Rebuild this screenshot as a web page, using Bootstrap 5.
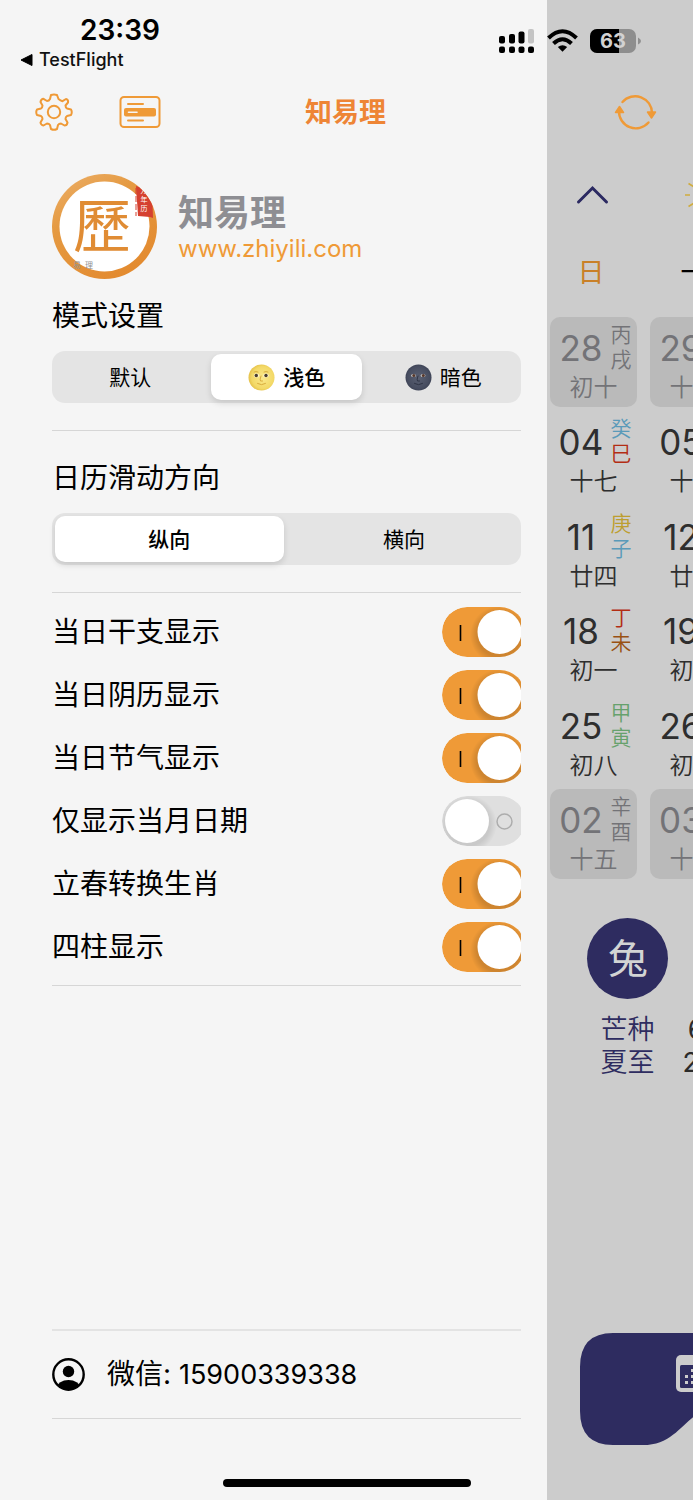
<!DOCTYPE html>
<html lang="zh-CN">
<head>
<meta charset="utf-8">
<meta name="viewport" content="width=device-width, initial-scale=1">
<title>知易理</title>
<link href="https://cdn.jsdelivr.net/npm/bootstrap@5.3.0/dist/css/bootstrap.min.css" rel="stylesheet">
<style>
  :root { --brand: #ef9a37; --navy: #2e2c60; --panel: #f5f5f5; --rule: #d6d6d6; }
  body { font-family: Inter, "Noto Sans CJK SC", sans-serif; background: #cccccc; color: #000; }
  svg { display: block; flex: none; }
  .screen { min-height: 100vh; overflow: hidden; }
  .plain-btn { background: none; border: 0; padding: 0; color: var(--brand); }

  /* status bar */
  .status-bar { top: 0; left: 0; right: 0; height: 84px; }
  .clock { font-size: 28px; font-weight: 600; line-height: 34px; padding: 13px 0 0 80px; }
  .back-app { font-size: 18px; font-weight: 500; line-height: 24px; margin: 1px 0 0 20px; gap: 6px; color: #111; }
  .status-icons { gap: 12px; padding: 28px 52px 0 0; }
  .battery-label { font: 700 20px Inter, sans-serif; }

  /* drawer */
  .drawer { flex: 0 0 79%; background: var(--panel); padding-top: 84px; }
  .drawer-head { height: 56px; padding-left: 35px; gap: 46px; }
  .drawer-title { font-size: 27px; font-weight: 700; line-height: 36px; color: #ee8535; margin-left: 98px; padding-top: 2px; }
  .drawer-body { padding: 34px 26px 0 52px; }
  .app-name { font-size: 36px; font-weight: 700; line-height: 40px; color: #8e8e93; }
  .app-link { font-size: 24px; line-height: 32px; color: var(--brand); text-decoration: none; }
  .profile { gap: 21px; margin-bottom: 18px; }
  .heading { font-size: 28px; line-height: 36px; font-weight: 400; margin: 0; padding: 1px 0 17px; }
  .rule { border: 0; border-top: 1px solid var(--rule); opacity: 1; margin: 0; }
  .segment { height: 52px; background: #e4e4e4; border-radius: 13px; margin-bottom: 27px; }
  .segment label { flex: 1 1 0; margin: 3px; padding-top: 1px; border-radius: 10px; gap: 8px; font-size: 21px; line-height: 28px; cursor: pointer; }
  .segment .btn-check:checked + label { background: #fff; font-weight: 500; box-shadow: 0 3px 6px rgba(0,0,0,.13); }
  .direction { padding-top: 28px; }
  .toggles { padding: 7px 0; }
  .toggle-row { height: 63px; font-size: 28px; line-height: 36px; }
  .toggle-row label { padding-top: 1px; }
  .toggle-row .form-check-input {
    width: 79px; height: 50px; margin: 0; border: 0; border-radius: 25px 0 0 25px; background-color: transparent; cursor: pointer;
    background-size: 79px 50px; background-position: left center; background-repeat: no-repeat;
    background-image: url("data:image/svg+xml,%3Csvg xmlns='http://www.w3.org/2000/svg' viewBox='0 0 79 50'%3E%3Cdefs%3E%3CradialGradient id='s'%3E%3Cstop offset='.75' stop-opacity='.1'/%3E%3Cstop offset='1' stop-opacity='0'/%3E%3C/radialGradient%3E%3CclipPath id='c'%3E%3Crect width='83' height='50' rx='25'/%3E%3C/clipPath%3E%3C/defs%3E%3Cg clip-path='url(%23c)'%3E%3Crect width='83' height='50' fill='%23dfdfdf'/%3E%3Ccircle cx='26' cy='28' r='29' fill='url(%23s)'/%3E%3Ccircle cx='25' cy='25' r='22' fill='%23fff'/%3E%3Ccircle cx='62.500' cy='25.500' r='7.500' fill='none' stroke='%23adadad' stroke-width='1.500'/%3E%3C/g%3E%3C/svg%3E");
  }
  .toggle-row .form-check-input:checked {
    background-color: transparent;
    background-image: url("data:image/svg+xml,%3Csvg xmlns='http://www.w3.org/2000/svg' viewBox='0 0 79 50'%3E%3Cdefs%3E%3CradialGradient id='s'%3E%3Cstop offset='.75' stop-opacity='.14'/%3E%3Cstop offset='1' stop-opacity='0'/%3E%3C/radialGradient%3E%3CclipPath id='c'%3E%3Crect width='83' height='50' rx='25'/%3E%3C/clipPath%3E%3C/defs%3E%3Cg clip-path='url(%23c)'%3E%3Crect width='83' height='50' fill='%23ef9a37'/%3E%3Ccircle cx='57' cy='28' r='29' fill='url(%23s)'/%3E%3Ccircle cx='57.500' cy='25' r='22' fill='%23fff'/%3E%3Crect x='17.700' y='18' width='1.600' height='16' fill='%23000'/%3E%3C/g%3E%3C/svg%3E");
  }
  .drawer-foot { padding: 0 26px 81px 52px; }
  .rule-soft { border-top: 2px solid #e3e3e3; }
  .contact { height: 87px; gap: 22px; font-size: 28px; line-height: 36px; }
  .contact-number { font-size: 27px; }
  .home-bar { left: 0; right: 0; bottom: 13px; }
  .home-bar span { width: 248px; height: 8px; border-radius: 4px; background: #000; }

  /* calendar behind the drawer */
  .calendar { flex: 1 1 0; min-width: 0; overflow: hidden; padding-top: 84px; }
  .cal-head { height: 56px; padding-left: 67px; }
  .cal-tools { height: 110px; padding-left: 28px; gap: 76px; }
  .week-row, .day-grid { display: grid; grid-template-columns: 87px 87px; column-gap: 13px; margin-left: 3px; width: 187px; }
  .week-row { height: 42px; font-size: 27px; line-height: 42px; text-align: center; padding-top: 2px; margin-bottom: 25px; }
  .week-row .sunday { color: #c98028; padding-right: 6px; }
  .day-grid { height: 562px; grid-auto-rows: 90px; align-content: space-between; color: #2e2e2e; font-weight: 350; }
  .day { border-radius: 10px; padding: 5px 6px 0 8px; }
  .day.outside { background: #bababa; color: #737377; }
  .day-number { font-size: 35px; line-height: 52px; width: 45px; text-align: center; font-weight: 400; }
  .stems { font-size: 21px; line-height: 25px; width: 21px; }
  .lunar { font-size: 24px; line-height: 28px; text-align: center; margin-left: -3px; }
  .blue { color: #5a9ab9; } .red { color: #b32d14; } .gold { color: #bd9e2f; } .brown { color: #995113; } .green { color: #66a16c; }
  .summary { padding: 39px 0 0 40px; }
  .zodiac { width: 81px; height: 81px; border-radius: 50%; background: var(--navy); color: #d2d4d4; font-size: 40px; line-height: 81px; text-align: center; }
  .terms { font-size: 27px; line-height: 33px; color: var(--navy); margin-top: 14px; gap: 28px; padding-left: 13px; font-weight: 350; }
  .terms-when { color: #2b2b2b; font-weight: 400; }
  .dock { margin: auto 0 0 32px; padding-bottom: 55px; }
</style>
</head>
<body>
<div class="screen d-flex position-relative">

  <main class="drawer d-flex flex-column">
    <header class="drawer-head d-flex align-items-center">
      <button class="plain-btn" type="button" aria-label="设置">
        <svg width="38" height="38" viewBox="0 0 38 38" fill="none" stroke="currentColor" stroke-width="2" stroke-linejoin="round">
          <path d="M16 2 Q19 1 22 2 L23.500 6 Q25.500 7.600 27.500 8.200 L31 6 Q33.500 6.500 33 9.500 L30.500 12.500 Q30.500 14.500 32 15.500 L36 16.500 Q37.500 19 36 22 L32 23 Q30.500 24 30.500 26 L32.500 29.500 Q32 32.500 29.500 32.500 L26 30.500 Q24 30.500 23 32 L22 36 Q19 37.500 16 36 L15 32 Q14 30.500 12 30.500 L8.500 32.500 Q5.800 32 5.500 29.500 L7.500 26 Q7.500 24 6 23 L2 22 Q.500 19 2 16.500 L6 15.500 Q7.500 14.500 7.500 12.500 L5.500 9 Q6 6 8.500 5.800 L12 8 Q14 8 15 6 Z"/>
          <circle cx="19" cy="19" r="6.200"/>
        </svg>
      </button>
      <button class="plain-btn" type="button" aria-label="卡片">
        <svg width="42" height="34" viewBox="0 0 42 34" fill="none" stroke="currentColor" stroke-width="2" stroke-linecap="round">
          <rect x="1.500" y="2" width="39" height="30" rx="3.500"/>
          <path d="M9 9H24M9 25.500H24"/>
          <rect x="5" y="13" width="32" height="8.600" rx="2" fill="currentColor" stroke="none"/>
          <path d="M9.500 17.200H18" stroke="#f5f5f5" stroke-width="1.600"/>
        </svg>
      </button>
      <h1 class="drawer-title mb-0">知易理</h1>
    </header>

    <div class="drawer-body">
      <section class="profile d-flex align-items-center">
        <svg width="105" height="105" viewBox="0 0 105 105">
          <defs>
            <linearGradient id="ring" x1="0" y1="0" x2=".6" y2="1"><stop offset="0" stop-color="#ecb06a"/><stop offset=".4" stop-color="#e59a42"/><stop offset="1" stop-color="#e38b30"/></linearGradient>
            <clipPath id="disc"><circle cx="52.500" cy="52.500" r="52.500"/></clipPath>
          </defs>
          <circle cx="52.500" cy="52.500" r="52.500" fill="url(#ring)"/>
          <circle cx="52.500" cy="52.500" r="45" fill="#fff"/>
          <text x="50" y="73" text-anchor="middle" font-size="58" font-family="Noto Sans CJK TC, sans-serif" fill="#e08c34">歷</text>
          <g clip-path="url(#disc)">
            <path d="M84 12 L87 13 V11 L100 13 L101 44 L98 43 L86 42 Z" fill="#d5402f"/>
            <path d="M84 14V42" stroke="#d5402f" stroke-width="1" stroke-dasharray="6 2"/>
            <g font-family="Noto Sans CJK SC, sans-serif" font-size="7" fill="#fff" text-anchor="middle"><text x="92" y="19">万</text><text x="92" y="28">年</text><text x="92" y="37">历</text></g>
            <text x="21" y="94" font-family="Noto Sans CJK SC, sans-serif" font-size="8" fill="#929292">易&#8194;理</text>
          </g>
        </svg>
        <div class="d-flex flex-column pt-1">
          <span class="app-name">知易理</span>
          <a class="app-link" href="#">www.zhiyili.com</a>
        </div>
      </section>

      <section>
        <h2 class="heading">模式设置</h2>
        <div class="segment d-flex" role="group" aria-label="模式设置">
          <input class="btn-check" type="radio" name="mode" id="mode-auto">
          <label class="d-flex align-items-center justify-content-center" for="mode-auto">默认</label>
          <input class="btn-check" type="radio" name="mode" id="mode-light" checked>
          <label class="d-flex align-items-center justify-content-center" for="mode-light">
            <svg width="27" height="27" viewBox="0 0 27 27">
              <defs><radialGradient id="sunny" cx=".55" cy=".5" r=".6"><stop offset="0" stop-color="#fbe98c"/><stop offset=".7" stop-color="#f3d967"/><stop offset="1" stop-color="#dfb63c"/></radialGradient></defs>
              <circle cx="13.500" cy="13.500" r="13" fill="url(#sunny)"/>
              <g fill="#fff6cf"><ellipse cx="8.500" cy="11.500" rx="2.700" ry="2.100"/><ellipse cx="18" cy="11.500" rx="2.700" ry="2.100"/></g>
              <g fill="#493c2e"><circle cx="8.300" cy="11.500" r="1.700"/><circle cx="18" cy="11.500" r="1.700"/></g>
              <path d="M13 12 Q11.500 16 12.500 17 H14.500 M9.500 19.500 Q13.500 22 17.500 19.500 M6 8 Q8 7 10 8 M16 8 Q18 7 20 8" fill="none" stroke="#d9ac3d" stroke-linecap="round"/>
            </svg>浅色</label>
          <input class="btn-check" type="radio" name="mode" id="mode-dark">
          <label class="d-flex align-items-center justify-content-center" for="mode-dark">
            <svg width="27" height="27" viewBox="0 0 27 27">
              <defs><radialGradient id="night" cx=".5" cy=".5" r=".6"><stop offset="0" stop-color="#5a6072"/><stop offset=".7" stop-color="#474d60"/><stop offset="1" stop-color="#323749"/></radialGradient></defs>
              <circle cx="13.500" cy="13.500" r="13" fill="url(#night)"/>
              <g fill="#c8c4c2"><ellipse cx="8.500" cy="11.500" rx="2.500" ry="1.600"/><ellipse cx="18" cy="11.500" rx="2.500" ry="1.600"/></g>
              <g fill="#55372b"><circle cx="8.800" cy="11.500" r="1.500"/><circle cx="18.300" cy="11.500" r="1.500"/></g>
              <path d="M13 12 Q11.500 16 12.500 17 H14.500 M9.500 19.500 Q13.500 22 17.500 19.500" fill="none" stroke="#2f3445" stroke-linecap="round"/>
            </svg>暗色</label>
        </div>
      </section>
      <hr class="rule">

      <section class="direction">
        <h2 class="heading">日历滑动方向</h2>
        <div class="segment d-flex" role="group" aria-label="日历滑动方向">
          <input class="btn-check" type="radio" name="dir" id="dir-v" checked>
          <label class="d-flex align-items-center justify-content-center" for="dir-v">纵向</label>
          <input class="btn-check" type="radio" name="dir" id="dir-h">
          <label class="d-flex align-items-center justify-content-center" for="dir-h">横向</label>
        </div>
      </section>
      <hr class="rule">

      <section class="toggles">
        <div class="toggle-row d-flex align-items-center justify-content-between"><label for="t1">当日干支显示</label><input class="form-check-input" type="checkbox" role="switch" id="t1" checked></div>
        <div class="toggle-row d-flex align-items-center justify-content-between"><label for="t2">当日阴历显示</label><input class="form-check-input" type="checkbox" role="switch" id="t2" checked></div>
        <div class="toggle-row d-flex align-items-center justify-content-between"><label for="t3">当日节气显示</label><input class="form-check-input" type="checkbox" role="switch" id="t3" checked></div>
        <div class="toggle-row d-flex align-items-center justify-content-between"><label for="t4">仅显示当月日期</label><input class="form-check-input" type="checkbox" role="switch" id="t4"></div>
        <div class="toggle-row d-flex align-items-center justify-content-between"><label for="t5">立春转换生肖</label><input class="form-check-input" type="checkbox" role="switch" id="t5" checked></div>
        <div class="toggle-row d-flex align-items-center justify-content-between"><label for="t6">四柱显示</label><input class="form-check-input" type="checkbox" role="switch" id="t6" checked></div>
      </section>
      <hr class="rule">
    </div>

    <footer class="drawer-foot mt-auto">
      <hr class="rule rule-soft">
      <div class="contact d-flex align-items-center">
        <svg width="33" height="33" viewBox="0 0 33 33">
          <defs><clipPath id="head"><circle cx="16.500" cy="16.500" r="15.500"/></clipPath></defs>
          <circle cx="16.500" cy="16.500" r="15.200" fill="none" stroke="#000" stroke-width="2.400"/>
          <circle cx="16.500" cy="13.500" r="5.700" fill="#000"/>
          <ellipse cx="16.500" cy="30" rx="11.500" ry="8" fill="#000" clip-path="url(#head)"/>
        </svg>
        <span>微信: <span class="contact-number">15900339338</span></span>
      </div>
      <hr class="rule">
    </footer>
  </main>

  <aside class="calendar d-flex flex-column">
    <div class="cal-head d-flex align-items-center">
      <button class="plain-btn" type="button" aria-label="刷新">
        <svg width="44" height="38" viewBox="0 0 44 38" fill="none" stroke="currentColor" stroke-width="2.400" stroke-linecap="round">
          <path d="M8.500 9 A16.800 16.800 0 0 1 38 20M34.500 29.500 A16.800 16.800 0 0 1 5 18"/>
          <path d="M33.500 19H41.500L37.500 25ZM1.500 19.500H9.500L5.500 13.500Z" fill="currentColor" stroke-width="1.500" stroke-linejoin="round"/>
        </svg>
      </button>
    </div>
    <div class="cal-tools d-flex align-items-center">
      <button class="plain-btn" type="button" aria-label="收起">
        <svg width="34" height="20" viewBox="0 0 34 20" fill="none" stroke="#2b2961" stroke-width="3" stroke-linecap="round"><path d="M3.500 17 L17.500 3 L31.500 17"/></svg>
      </button>
      <svg width="32" height="32" viewBox="0 0 32 32" fill="none" stroke="#d0ac3e" stroke-width="1.600"><circle cx="19" cy="16" r="7"/><path d="M0 16H5M3.500 4.500L8.500 7.500M3.500 27.500L8.500 24.500M19 0V5M19 27V32M29 16H32"/></svg>
    </div>
    <div class="week-row"><span class="sunday">日</span><span>一</span></div>
    <div class="day-grid">
      <div class="day outside"><div class="d-flex"><span class="day-number">28</span><span class="stems ms-auto">丙<br>戌</span></div><div class="lunar">初十</div></div>
      <div class="day outside"><div class="d-flex"><span class="day-number">29</span></div><div class="lunar">十一</div></div>
      <div class="day"><div class="d-flex"><span class="day-number">04</span><span class="stems ms-auto"><span class="blue">癸</span><br><span class="red">巳</span></span></div><div class="lunar">十七</div></div>
      <div class="day"><div class="d-flex"><span class="day-number">05</span></div><div class="lunar">十八</div></div>
      <div class="day"><div class="d-flex"><span class="day-number">11</span><span class="stems ms-auto"><span class="gold">庚</span><br><span class="blue">子</span></span></div><div class="lunar">廿四</div></div>
      <div class="day"><div class="d-flex"><span class="day-number">12</span></div><div class="lunar">廿五</div></div>
      <div class="day"><div class="d-flex"><span class="day-number">18</span><span class="stems ms-auto"><span class="red">丁</span><br><span class="brown">未</span></span></div><div class="lunar">初一</div></div>
      <div class="day"><div class="d-flex"><span class="day-number">19</span></div><div class="lunar">初二</div></div>
      <div class="day"><div class="d-flex"><span class="day-number">25</span><span class="stems ms-auto green">甲<br>寅</span></div><div class="lunar">初八</div></div>
      <div class="day"><div class="d-flex"><span class="day-number">26</span></div><div class="lunar">初九</div></div>
      <div class="day outside"><div class="d-flex"><span class="day-number">02</span><span class="stems ms-auto">辛<br>酉</span></div><div class="lunar">十五</div></div>
      <div class="day outside"><div class="d-flex"><span class="day-number">03</span></div><div class="lunar">十六</div></div>
    </div>
    <div class="summary">
      <div class="zodiac">兔</div>
      <div class="terms d-flex text-nowrap">
        <div>芒种<br>夏至</div>
        <div class="terms-when text-center">6<br>21</div>
      </div>
    </div>
    <div class="dock">
      <svg width="230" height="112" viewBox="0 0 230 112">
        <path d="M34 0H196Q230 0 230 34V78Q230 112 196 112H166C132 112 126 76 117 82C103 91 92 112 64 112H34Q1 112 1 78V34Q1 0 34 0Z" fill="#2e2c60"/>
        <rect x="97" y="22" width="38" height="37" rx="5" fill="#cccccc"/>
        <rect x="101" y="32" width="30" height="23" rx="1.500" fill="#2e2c60"/>
        <g fill="#cccccc"><rect x="106" y="42" width="3" height="3"/><rect x="106" y="48" width="3" height="3"/><rect x="112" y="36" width="3" height="3"/><rect x="112" y="42" width="3" height="3"/><rect x="112" y="48" width="3" height="3"/></g>
      </svg>
    </div>
  </aside>

  <div class="status-bar position-absolute d-flex justify-content-between">
    <div>
      <div class="clock">23:39</div>
      <div class="back-app d-flex align-items-center">
        <svg width="13" height="12" viewBox="0 0 13 12"><path d="M1 6 L12 .500V11.500Z" fill="#000" stroke="#000" stroke-linejoin="round"/></svg>TestFlight
      </div>
    </div>
    <div class="status-icons d-flex align-items-start">
      <svg width="36" height="26" viewBox="0 0 36 26">
        <rect x="0" y="8" width="6" height="7.500" rx="2"/><rect x="10" y="6" width="6" height="9.500" rx="2"/><rect x="19.500" y="3.500" width="6" height="12" rx="2"/><rect x="29" y="1" width="6" height="14.500" rx="2" fill="#c4c4c4"/>
        <rect x="0" y="18.500" width="6" height="6.500" rx="2"/><rect x="10" y="18.500" width="6" height="6.500" rx="2"/><rect x="19.500" y="18.500" width="6" height="6.500" rx="2"/><rect x="29" y="18.500" width="6" height="6.500" rx="2"/>
      </svg>
      <svg width="31" height="26" viewBox="0 0 31 26" fill="none" stroke="#000" stroke-width="4">
        <path d="M1.500 10 Q15.500 -3.500 29.500 10"/><path d="M6.500 15.500 Q15.500 7 24.500 15.500"/><path d="M10.800 19 Q15.500 15.500 20.200 19 L15.500 23.800Z" fill="#000" stroke="none"/>
      </svg>
      <svg width="51" height="26" viewBox="0 0 51 26">
        <defs><clipPath id="cell"><rect x="0" y="1" width="46" height="24" rx="7"/></clipPath></defs>
        <g clip-path="url(#cell)"><rect width="46" height="26" fill="#8e8e8e"/><rect width="29" height="26" fill="#000"/></g>
        <path d="M48 9.500 Q51 11 51 13 T48 16.500Z" fill="#8e8e8e"/>
        <text class="battery-label" x="23" y="20" text-anchor="middle" fill="#d2d2d2">63</text>
      </svg>
    </div>
  </div>
  <div class="home-bar position-absolute d-flex justify-content-center"><span></span></div>
</div>
<script src="https://cdn.jsdelivr.net/npm/bootstrap@5.3.0/dist/js/bootstrap.bundle.min.js"></script>
</body>
</html>
